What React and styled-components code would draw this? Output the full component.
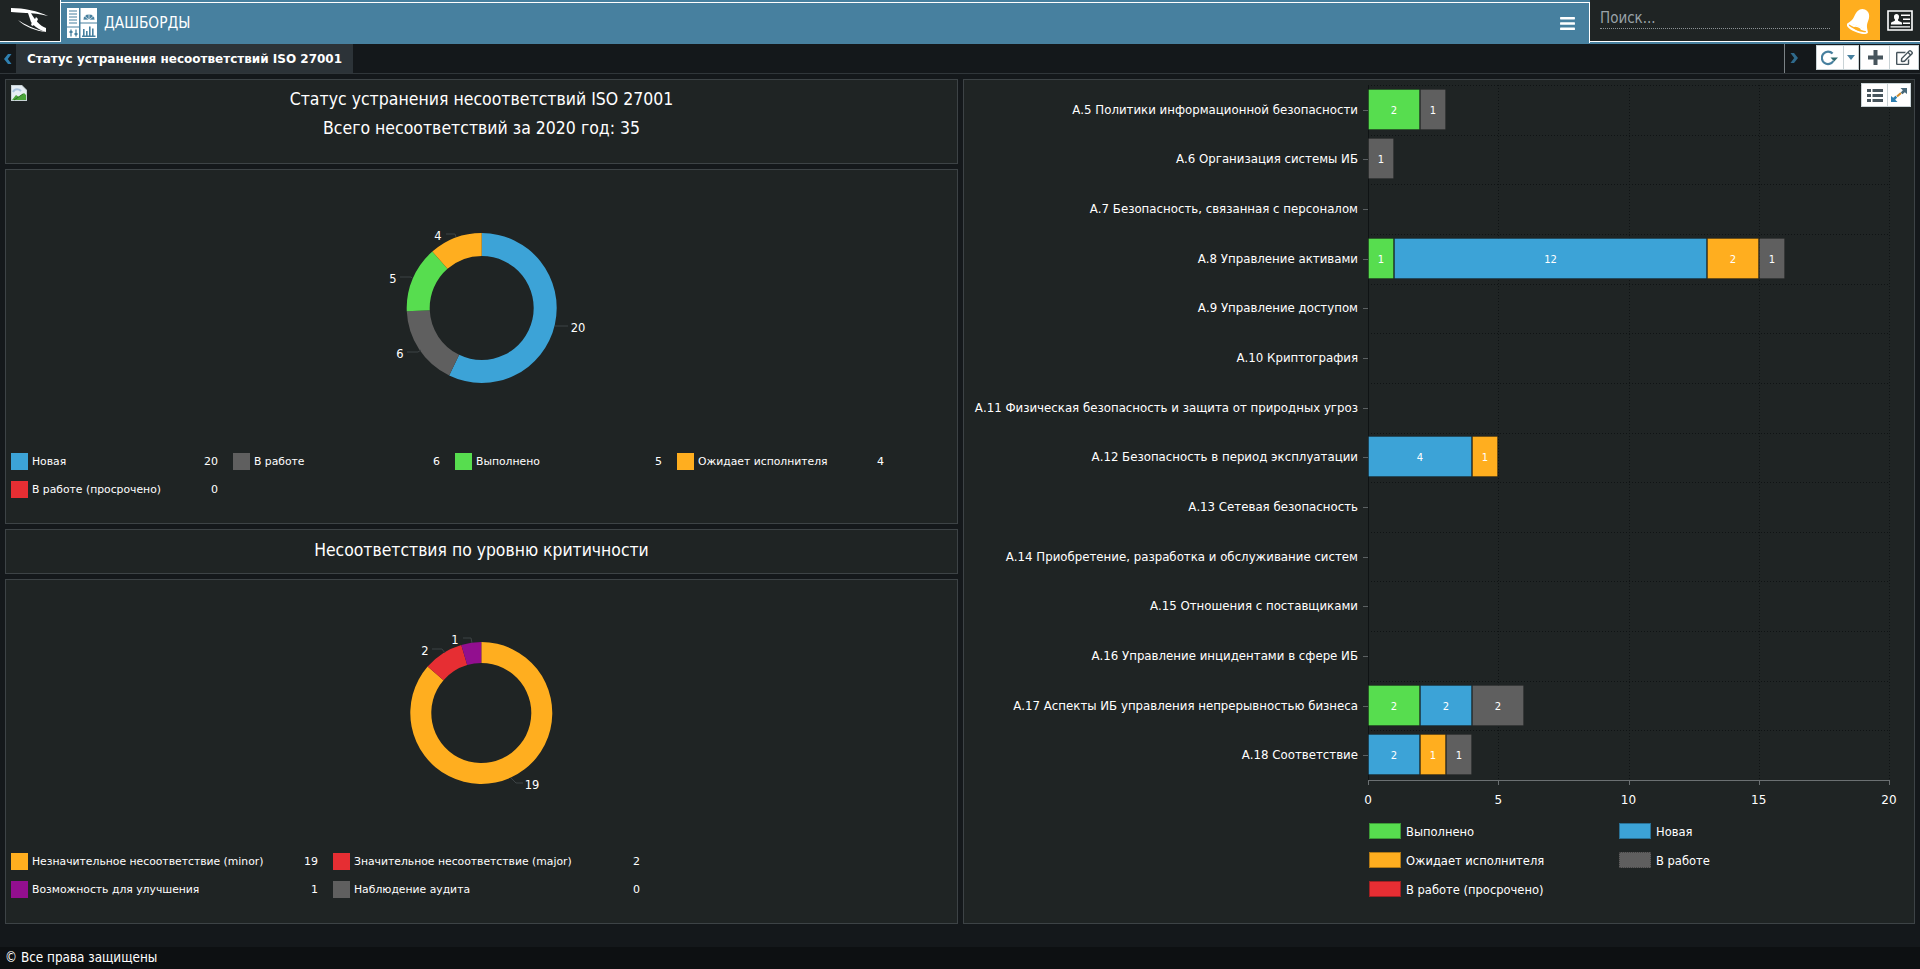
import React from 'react';
import styled, { createGlobalStyle } from 'styled-components';
import { FaRegEdit, FaBars } from 'react-icons/fa';

const colors = {
    blue: '#3ca3d7',
    gray: '#5f5f5f',
    green: '#57dd4f',
    orange: '#ffae1f',
    red: '#e62e33',
    purple: '#920f8f',
};

const narrowFont = `"DejaVu Sans Condensed", "DejaVu Sans", sans-serif`;

const GlobalStyle = createGlobalStyle`
    html, body {
        margin: 0;
        padding: 0;
        height: 100%;
        background: #14181b;
        color: #fff;
        font-family: "DejaVu Sans", sans-serif;
        overflow: hidden;
    }
`;

const Page = styled.div`
    display: flex;
    flex-direction: column;
    height: 969px;
`;

const Header = styled.header`
    display: flex;
    height: 44px;
    background: #47809f;
    flex: none;
`;

const LogoCell = styled.div`
    width: 60px;
    height: 41px;
    flex: none;
    background: #1f2424;
    border-right: 1px solid #fff;
    border-bottom: 1px solid #fff;
`;

const MainNav = styled.nav`
    flex: 1;
    height: 40px;
    margin-top: 2px;
    border-top: 1px solid #fff;
    border-right: 1px solid #fff;
    display: flex;
    align-items: center;
    padding: 0 13px 0 6px;
    gap: 7px;
`;

const NavTitle = styled.span`
    flex: 1;
    font-size: 15.3px;
    font-family: ${narrowFont};
    font-stretch: condensed;
`;

const SearchCell = styled.div`
    width: 230px;
    height: 41px;
    flex: none;
    background: #1f2424;
    border-bottom: 1px solid #fff;
    padding: 0 10px;
`;

const SearchField = styled.div`
    height: 29px;
    padding-top: 10px;
    box-sizing: border-box;
    line-height: 17px;
    font-size: 15px;
    font-family: ${narrowFont};
    font-stretch: condensed;
    color: #9aa3a8;
    border-bottom: 1px dotted #8b9296;
`;

const BellCell = styled.div`
    width: 40px;
    height: 41px;
    flex: none;
    box-sizing: content-box;
    background: #1f2424;
    border-bottom: 1px solid #fff;
`;

const BellFill = styled.div`
    height: 40px;
    background: #ffae1f;
    display: flex;
    align-items: center;
    justify-content: center;
`;

const ProfileCell = styled.div`
    width: 40px;
    height: 41px;
    flex: none;
    background: #1f2424;
    border-bottom: 1px solid #fff;
    display: flex;
    align-items: center;
    justify-content: center;
`;

const TabBar = styled.div`
    display: flex;
    height: 29px;
    flex: none;
    border-bottom: 1px solid #30363a;
    background: #14181b;
`;

const ArrowLeft = styled.div`
    width: 16px;
    flex: none;
    display: flex;
    align-items: center;
    justify-content: center;
`;

const ArrowRight = styled.div`
    width: 31px;
    height: 28px;
    flex: none;
    box-sizing: border-box;
    padding-left: 5px;
    margin-top: -1px;
    display: flex;
    align-items: center;
`;

const Tab = styled.div`
    width: 337px;
    flex: none;
    box-sizing: border-box;
    background: #2c3338;
    display: flex;
    align-items: center;
    justify-content: center;
    font-size: 12px;
    font-weight: bold;
`;

const TabSpacer = styled.div`
    flex: 1;
    border-right: 1px solid #7b8286;
`;

const ToolArea = styled.div`
    width: 135px;
    flex: none;
    display: flex;
    align-items: flex-start;
    padding-top: 1px;
`;

const ButtonGroup = styled.div`
    display: flex;
    height: ${p => p.$h || 25}px;
    background: #fff;
    border: 1px solid #c9d3d6;
    box-sizing: border-box;
    margin-left: ${p => p.$ml || 0}px;
`;

const IconButton = styled.div`
    width: ${p => p.$w}px;
    display: flex;
    align-items: center;
    justify-content: center;
    box-sizing: border-box;
    & + & {
        border-left: 1px solid #c9d3d6;
    }
`;

const Content = styled.main`
    flex: 1;
    display: grid;
    grid-template-columns: 953px 952px;
    gap: 5px;
    padding: 5px 5px 23px;
    min-height: 0;
`;

const Column = styled.div`
    display: flex;
    flex-direction: column;
    gap: 5px;
    min-height: 0;
`;

const Panel = styled.section`
    box-sizing: border-box;
    background: #1f2424;
    border: 1px solid #3d4346;
    height: ${p => (p.$h ? p.$h + 'px' : 'auto')};
    position: relative;
`;

const ReportHead = styled.div`
    text-align: center;
    padding-top: 10px;
    font-family: ${narrowFont};
    font-stretch: condensed;
`;

const HeadLine = styled.div`
    font-size: 17.5px;
    line-height: 19px;
    margin-bottom: ${p => p.$mb || 0}px;
`;

const BrokenImage = styled.svg`
    position: absolute;
    left: 5px;
    top: 5px;
`;

const SectionTitle = styled.div`
    text-align: center;
    font-size: 17.4px;
    line-height: 41px;
    font-family: ${narrowFont};
    font-stretch: condensed;
`;

const ChartSvg = styled.svg`
    display: block;
    font-family: "DejaVu Sans", sans-serif;
`;

const RowLabel = styled.text`
    font-size: 13.1px;
    font-family: ${narrowFont};
    font-stretch: condensed;
    fill: #fff;
    text-anchor: end;
`;

const Legend = styled.div`
    display: grid;
    grid-template-columns: repeat(${p => p.$count}, ${p => p.$col}px);
    column-gap: 15px;
    row-gap: 11px;
    padding: 13px 0 0 5px;
`;

const LegendRow = styled.div`
    display: flex;
    align-items: center;
    height: 17px;
    font-size: 10.8px;
`;

const Swatch = styled.span`
    width: 17px;
    height: 17px;
    flex: none;
    margin-right: 4px;
    background: ${p => p.$color};
`;

const LegendValue = styled.span`
    margin-left: auto;
    font-size: 11px;
`;

const BarLegend = styled.div`
    display: grid;
    grid-template-columns: 250px 250px;
    row-gap: 13px;
    padding: 3px 0 0 405px;
`;

const BarLegendRow = styled.div`
    display: flex;
    align-items: center;
    height: 16px;
    font-size: 12.8px;
    font-family: ${narrowFont};
    font-stretch: condensed;
`;

const BarSwatch = styled.span`
    width: 32px;
    height: 16px;
    flex: none;
    box-sizing: border-box;
    margin-right: 5px;
    background: ${p => p.$color};
    border: 1px ${p => (p.$dotted ? 'dotted' : 'solid')} rgba(0, 0, 0, 0.3);
`;

const FloatingTools = styled.div`
    position: absolute;
    top: 3px;
    right: 3px;
`;

const Footer = styled.footer`
    height: 22px;
    flex: none;
    background: #0d1012;
    padding-left: 5px;
    font-size: 13.4px;
    line-height: 22px;
    font-family: ${narrowFont};
    font-stretch: condensed;
`;

const point = (cx, cy, r, angle) => [
    cx + r * Math.sin(angle),
    cy - r * Math.cos(angle),
];

// ring sector, angles clockwise from the top
const sectorPath = (cx, cy, outer, inner, from, to) => {
    const large = to - from > Math.PI ? 1 : 0;
    const [x1, y1] = point(cx, cy, outer, from);
    const [x2, y2] = point(cx, cy, outer, to);
    const [x3, y3] = point(cx, cy, inner, to);
    const [x4, y4] = point(cx, cy, inner, from);
    return `M${x1} ${y1}A${outer} ${outer} 0 ${large} 1 ${x2} ${y2}L${x3} ${y3}A${inner} ${inner} 0 ${large} 0 ${x4} ${y4}Z`;
};

const Donut = ({ cx, cy, outer, inner, items, labels, viewBox, height }) => {
    const total = items.reduce((sum, i) => sum + i.value, 0);
    let angle = 0;
    return (
        <ChartSvg width="951" height={height} viewBox={viewBox}>
            {items.map(item => {
                const from = angle;
                angle += (item.value / total) * Math.PI * 2;
                return <path key={item.color} d={sectorPath(cx, cy, outer, inner, from, angle)} fill={item.color} />;
            })}
            {labels.map(l => (
                <g key={l.text}>
                    <polyline points={l.line} fill="none" stroke="#3d4345" />
                    <text x={l.x} y={l.y} fill="#fff" fontSize="11.5" textAnchor="middle">{l.text}</text>
                </g>
            ))}
        </ChartSvg>
    );
};

const statusItems = [
    { value: 20, color: colors.blue },
    { value: 6, color: colors.gray },
    { value: 5, color: colors.green },
    { value: 4, color: colors.orange },
];

const statusLabels = [
    { text: '20', x: 578, y: 332, line: '555,326 568,326' },
    { text: '6', x: 400, y: 358, line: '407,352 418,352 421,350' },
    { text: '5', x: 393, y: 283, line: '400,277 411,277 413,279' },
    { text: '4', x: 438, y: 240, line: '446,234 455,234 456,237' },
];

const severityItems = [
    { value: 19, color: colors.orange },
    { value: 2, color: colors.red },
    { value: 1, color: colors.purple },
];

const severityLabels = [
    { text: '19', x: 532, y: 789, line: '511,778 516,783 523,783' },
    { text: '2', x: 425, y: 655, line: '432,649 442,649 445,653' },
    { text: '1', x: 455, y: 644, line: '463,638 471,638 472,643' },
];

const statusLegend = [
    ['Новая', 20, colors.blue],
    ['В работе', 6, colors.gray],
    ['Выполнено', 5, colors.green],
    ['Ожидает исполнителя', 4, colors.orange],
    ['В работе (просрочено)', 0, colors.red],
];

const severityLegend = [
    ['Незначительное несоответствие (minor)', 19, colors.orange],
    ['Значительное несоответствие (major)', 2, colors.red],
    ['Возможность для улучшения', 1, colors.purple],
    ['Наблюдение аудита', 0, colors.gray],
];

const barRows = [
    ['А.5 Политики информационной безопасности', [[2, colors.green], [1, colors.gray]]],
    ['А.6 Организация системы ИБ', [[1, colors.gray]]],
    ['А.7 Безопасность, связанная с персоналом', []],
    ['А.8 Управление активами', [[1, colors.green], [12, colors.blue], [2, colors.orange], [1, colors.gray]]],
    ['А.9 Управление доступом', []],
    ['А.10 Криптография', []],
    ['А.11 Физическая безопасность и защита от природных угроз', []],
    ['А.12 Безопасность в период эксплуатации', [[4, colors.blue], [1, colors.orange]]],
    ['А.13 Сетевая безопасность', []],
    ['А.14 Приобретение, разработка и обслуживание систем', []],
    ['А.15 Отношения с поставщиками', []],
    ['А.16 Управление инцидентами в сфере ИБ', []],
    ['А.17 Аспекты ИБ управления непрерывностью бизнеса', [[2, colors.green], [2, colors.blue], [2, colors.gray]]],
    ['А.18 Соответствие', [[2, colors.blue], [1, colors.orange], [1, colors.gray]]],
];

const barLegend = [
    ['Выполнено', colors.green],
    ['Новая', colors.blue],
    ['Ожидает исполнителя', colors.orange],
    ['В работе', colors.gray],
    ['В работе (просрочено)', colors.red],
];

const X0 = 1368;
const UNIT = 26.05;
const TOP = 85;
const AXIS_Y = 780;
const PITCH = (AXIS_Y - TOP) / 14;
const GRID = '#0f1314';

const BarChart = () => (
    <ChartSvg width="950" height="740" viewBox="964 80 950 740">
        {[5, 10, 15, 20].map(v => (
            <line key={v} x1={Math.round(X0 + v * UNIT) + 0.5} x2={Math.round(X0 + v * UNIT) + 0.5} y1={TOP} y2={AXIS_Y} stroke={GRID} strokeDasharray="1 2" />
        ))}
        {barRows.map((_, i) => (
            <line key={i} x1={X0} x2={X0 + 20 * UNIT} y1={Math.round(TOP + i * PITCH) + 0.5} y2={Math.round(TOP + i * PITCH) + 0.5} stroke={GRID} strokeDasharray="1 2" />
        ))}
        <line x1={X0 + 0.5} x2={X0 + 0.5} y1={TOP} y2={AXIS_Y} stroke="#0f1314" />
        {barRows.map(([label, parts], i) => {
            const cy = Math.round(TOP + (i + 0.5) * PITCH);
            let value = 0;
            return (
                <g key={label}>
                    <line x1={X0 - 5} x2={X0} y1={cy + 0.5} y2={cy + 0.5} stroke="#5c6163" />
                    <RowLabel x={X0 - 10} y={cy + 4}>{label}</RowLabel>
                    {parts.map(([n, color], j) => {
                        const x = Math.round(X0 + value * UNIT);
                        const width = Math.round(n * UNIT);
                        value += n;
                        return (
                            <g key={j}>
                                <rect
                                    x={x + 0.5}
                                    y={cy - 20.5}
                                    width={width - 1}
                                    height={40}
                                    fill={color}
                                    stroke="rgba(0,0,0,0.25)"
                                    strokeDasharray={color === colors.gray ? '1 1' : undefined}
                                />
                                <text x={x + width / 2} y={cy + 4} fill="#fff" fontSize="10" textAnchor="middle">{n}</text>
                            </g>
                        );
                    })}
                </g>
            );
        })}
        <line x1={X0} x2={X0 + 20 * UNIT} y1={AXIS_Y + 0.5} y2={AXIS_Y + 0.5} stroke="#6b7072" />
        {[0, 5, 10, 15, 20].map(v => (
            <g key={v}>
                <line x1={Math.round(X0 + v * UNIT) + 0.5} x2={Math.round(X0 + v * UNIT) + 0.5} y1={AXIS_Y} y2={AXIS_Y + 5} stroke="#6b7072" />
                <text x={X0 + v * UNIT} y={804} fill="#fff" fontSize="12" textAnchor="middle">{v}</text>
            </g>
        ))}
    </ChartSvg>
);

const Logo = () => (
    <svg width="60" height="41" viewBox="0 0 60 41" style={{ display: 'block' }}>
        <path d="M11 8C24 8 38 11 48 16C40 14 33 13 26 13C20 13 15 12 11 12Z" fill="#fff" />
        <path d="M28 13L31 13C34 19 40 26 46 28L46 32C39 30 34 26 31 22C30 19 29 16 28 13Z" fill="#fff" />
        <path d="M18 20C24 24 34 29 46 32C36 31 25 27 18 20Z" fill="#fff" />
        <path d="M31 24C33 22 35 20 36 17L38 19C37 22 35 25 32 26Z" fill="#fff" />
    </svg>
);

const DashboardIcon = () => (
    <svg width="30" height="30" viewBox="0 0 30 30">
        <path d="M0 0H12V18.5H0Z" fill="#fff" />
        <path d="M2 3H10M2 6H10M2 9H10M2 12H10M2 15H10" stroke="#47809f" strokeWidth="1.2" />
        <path d="M13.5 0H30V14.5H13.5Z" fill="#fff" />
        <path d="M16 12A6 6 0 0 1 28 12ZM22 3V12M16.5 7L22 12M27.5 7L22 12" fill="#47809f" stroke="#fff" strokeWidth="0.7" />
        <path d="M0 19.5H12V30H0Z" fill="#fff" />
        <path d="M4 21.5V28.5M9 21.5V28.5" stroke="#47809f" strokeWidth="1.3" />
        <path d="M2.5 23H5.5V25H2.5ZM7.5 25H10.5V27H7.5Z" fill="#47809f" />
        <path d="M13.5 15.5H30V30H13.5Z" fill="#fff" />
        <path d="M15 28.2H28.5M16.8 28V21M19.8 28V23M22.8 28V18.5M25.8 28V20.5" stroke="#47809f" strokeWidth="1.6" fill="none" />
    </svg>
);

const BellIcon = () => (
    <svg width="27" height="27" viewBox="0 0 26 26">
        <g transform="rotate(22 13 13)">
            <path d="M13 1.5C18 1.5 20 6 20 11C20 16 22 18 24 21C24 23.5 19 25 13 25C7 25 2 23.5 2 21C4 18 6 16 6 11C6 6 8 1.5 13 1.5Z" fill="#fff" />
            <ellipse cx="13" cy="21" rx="9" ry="2" fill="#ffae1f" />
            <ellipse cx="13" cy="20" rx="9.5" ry="1.4" fill="#fff" />
            <ellipse cx="13" cy="21.5" rx="3.5" ry="1.4" fill="#ffae1f" />
        </g>
    </svg>
);

const ProfileIcon = () => (
    <svg width="26" height="21" viewBox="0 0 26 21">
        <path d="M1 1H25V20H1Z" fill="none" stroke="#fff" strokeWidth="1.6" />
        <path d="M4 14.5V13C4 12 7 11.5 8 10.5V9.5C7.3 9 7 8 7 6.5C7 5 8 4 9.5 4C11 4 12 5 12 6.5C12 8 11.7 9 11 9.5V10.5C12 11.5 15 12 15 13V14.5Z" fill="#fff" />
        <path d="M14 4.5H23V6H14ZM16 8.5H23V10H16ZM16 12.5H23V14H16ZM3.5 16.2H23V17.6H3.5Z" fill="#fff" />
    </svg>
);

const BrokenIcon = () => (
    <BrokenImage width="16" height="16" viewBox="0 0 16 16">
        <path d="M0 0H11L16 5V16H0Z" fill="#c8d3d6" />
        <path d="M1 1H10.5L15 5.5V15H1Z" fill="#e6eef4" />
        <path d="M1 15L5 10L8 12L13 8L15 10V15Z" fill="#4aa53a" />
        <path d="M3 15L12 9" stroke="#2c6e24" />
        <path d="M2 7C4 3 8 4 10 6" stroke="#a9c4de" strokeWidth="2" fill="none" />
    </BrokenImage>
);

const Chevron = ({ color, flip }) => (
    <svg width="8" height="10" viewBox="0 0 8 10" style={flip ? { transform: 'scaleX(-1)' } : undefined}>
        <path d="M4 0L7.5 0L3.8 5L7.5 10L4 10L0 5Z" fill={color} />
    </svg>
);

const RefreshIcon = () => (
    <svg width="18" height="16" viewBox="0 0 18 16">
        <path d="M12.4 11A6.2 6.2 0 1 1 11.6 3.6" fill="none" stroke="#47809f" strokeWidth="2.2" />
        <path d="M9.5 7.5H17L13.2 11.5Z" fill="#2f6a6e" />
    </svg>
);

const PlusIcon = () => (
    <svg width="15" height="15" viewBox="0 0 15 15">
        <path d="M5.5 0H9.5V5.5H15V9.5H9.5V15H5.5V9.5H0V5.5H5.5Z" fill="#47555d" />
    </svg>
);

const ListIcon = () => (
    <svg width="16" height="13" viewBox="0 0 16 13">
        <path d="M0 0H4V3H0ZM5.5 0H16V3H5.5ZM0 5H4V8H0ZM5.5 5H16V8H5.5ZM0 10H4V13H0ZM5.5 10H16V13H5.5Z" fill="#47555d" />
    </svg>
);

const ExpandIcon = () => (
    <svg width="16" height="14" viewBox="0 0 16 14">
        <path d="M6 8.5L10 5" stroke="#d08a2a" strokeWidth="2" />
        <path d="M9.5 0H16V6L13.8 4.2L11.5 6.2L9.8 4.5L11.8 2.2Z" fill="#47687a" />
        <path d="M0 14V8L2.2 9.8L4.5 7.8L6.2 9.5L4.2 11.8L6.5 14Z" fill="#2d7fb0" />
    </svg>
);

const App = () => (
    <Page>
        <GlobalStyle />
        <Header>
            <LogoCell><Logo /></LogoCell>
            <MainNav>
                <DashboardIcon />
                <NavTitle>ДАШБОРДЫ</NavTitle>
                <FaBars size={17} color="#fff" />
            </MainNav>
            <SearchCell><SearchField>Поиск...</SearchField></SearchCell>
            <BellCell><BellFill><BellIcon /></BellFill></BellCell>
            <ProfileCell><ProfileIcon /></ProfileCell>
        </Header>
        <TabBar>
            <ArrowLeft><Chevron color="#2f7fb0" /></ArrowLeft>
            <Tab>Статус устранения несоответствий ISO 27001</Tab>
            <TabSpacer />
            <ToolArea>
                <ArrowRight><Chevron color="#2f6a8c" flip /></ArrowRight>
                <ButtonGroup>
                    <IconButton $w={26}><RefreshIcon /></IconButton>
                    <IconButton $w={15}>
                        <svg width="8" height="5" viewBox="0 0 8 5"><path d="M0 0H8L4 5Z" fill="#47809f" /></svg>
                    </IconButton>
                </ButtonGroup>
                <ButtonGroup $ml={1}>
                    <IconButton $w={28}><PlusIcon /></IconButton>
                    <IconButton $w={29}><FaRegEdit size={17} color="#47555d" /></IconButton>
                </ButtonGroup>
            </ToolArea>
        </TabBar>
        <Content>
            <Column>
                <Panel $h={85}>
                    <BrokenIcon />
                    <ReportHead>
                        <HeadLine $mb={10}>Статус устранения несоответствий ISO 27001</HeadLine>
                        <HeadLine>Всего несоответствий за 2020 год: 35</HeadLine>
                    </ReportHead>
                </Panel>
                <Panel $h={355}>
                    <Donut cx={481.7} cy={308} outer={75} inner={52} items={statusItems} labels={statusLabels} viewBox="6 170 951 270" height="270" />
                    <Legend $count={4} $col={207}>
                        {statusLegend.map(([name, value, color]) => (
                            <LegendRow key={name}>
                                <Swatch $color={color} />
                                {name}
                                <LegendValue>{value}</LegendValue>
                            </LegendRow>
                        ))}
                    </Legend>
                </Panel>
                <Panel $h={45}>
                    <SectionTitle>Несоответствия по уровню критичности</SectionTitle>
                </Panel>
                <Panel $h={345}>
                    <Donut cx={481.3} cy={713} outer={71} inner={50} items={severityItems} labels={severityLabels} viewBox="6 580 951 260" height="260" />
                    <Legend $count={2} $col={307}>
                        {severityLegend.map(([name, value, color]) => (
                            <LegendRow key={name}>
                                <Swatch $color={color} />
                                {name}
                                <LegendValue>{value}</LegendValue>
                            </LegendRow>
                        ))}
                    </Legend>
                </Panel>
            </Column>
            <Panel>
                <FloatingTools>
                    <ButtonGroup $h={24}>
                        <IconButton $w={25}><ListIcon /></IconButton>
                        <IconButton $w={23}><ExpandIcon /></IconButton>
                    </ButtonGroup>
                </FloatingTools>
                <BarChart />
                <BarLegend>
                    {barLegend.map(([name, color]) => (
                        <BarLegendRow key={name}>
                            <BarSwatch $color={color} $dotted={color === colors.gray} />
                            {name}
                        </BarLegendRow>
                    ))}
                </BarLegend>
            </Panel>
        </Content>
        <Footer>© Все права защищены</Footer>
    </Page>
);

export default App;
